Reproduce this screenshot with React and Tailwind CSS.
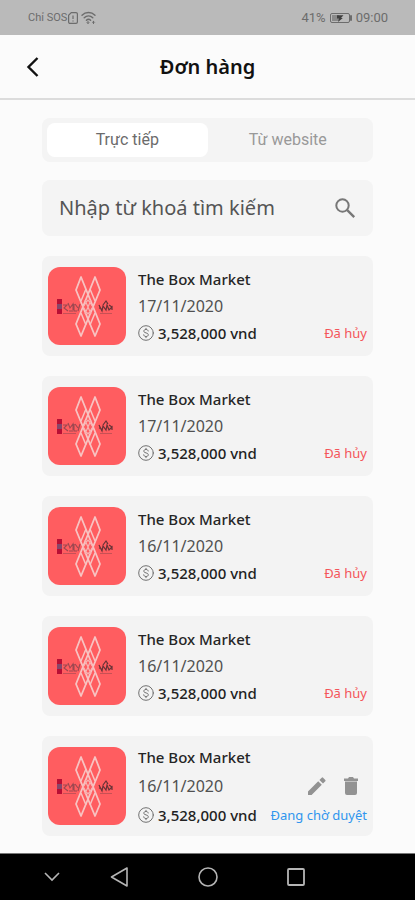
const orders = [
  { id: 1, name: 'The Box Market', date: '17/11/2020', total: 3528000, pending: false },
  { id: 2, name: 'The Box Market', date: '17/11/2020', total: 3528000, pending: false },
  { id: 3, name: 'The Box Market', date: '16/11/2020', total: 3528000, pending: false },
  { id: 4, name: 'The Box Market', date: '16/11/2020', total: 3528000, pending: false },
  { id: 5, name: 'The Box Market', date: '16/11/2020', total: 3528000, pending: true },
];

function money(n) {
  return `${n.toLocaleString('en-US')} vnd`;
}

function StatusBar() {
  return (
    <div className="h-[35px] bg-[#bababa] flex items-center justify-between pl-7 pr-[27px] pt-px font-['Roboto',sans-serif] text-[#6c6c6c]">
      <div className="flex items-center">
        <span className="text-[11px]">Chỉ SOS</span>
        <svg className="w-3 h-3.5" viewBox="0 0 12 14" fill="none" stroke="currentColor" strokeWidth="1.2">
          <path d="M4.3 1.6H9a1.4 1.4 0 0 1 1.4 1.4v8A1.4 1.4 0 0 1 9 12.4H3A1.4 1.4 0 0 1 1.6 11V4.3z" />
          <path d="M6 4.5v3.6M6 9.4v1.2" />
        </svg>
        <svg className="w-4 h-3.5 ml-0.5" viewBox="0 0 16 14" fill="none" stroke="currentColor" strokeWidth="1.4" strokeLinecap="round">
          <path d="M1 4.2C4.6.6 10.4.6 14 4.2M3.2 6.8c2.5-2.4 6.1-2.4 8.6 0M5.4 9.2c1.3-1.2 2.9-1.2 4.2 0" />
          <path d="M7 10.2v2.2M6 11.5l1 1 1-1M12.5 12.6v-2.2M11.5 11.3l1-1 1 1" strokeWidth="1" />
        </svg>
      </div>
      <div className="flex items-center gap-[3px] text-[13px]">
        <span>41%</span>
        <svg className="w-6 h-3" viewBox="0 0 24 12">
          <rect x="1.5" y="1.5" width="19" height="9" rx="1.5" fill="none" stroke="currentColor" />
          <rect x="3" y="3" width="7" height="6" fill="#8a8a8a" />
          <path d="M8 3.2h6.5L12 6h1.8L9 10l1-3.4H8z" fill="#3f3f3f" />
          <rect x="21" y="3" width="2" height="6" rx="1" fill="currentColor" />
        </svg>
        <span>09:00</span>
      </div>
    </div>
  );
}

function Header() {
  return (
    <header className="h-[65px] border-b-2 border-[#dcdcdc] grid grid-cols-[64px_1fr_64px] items-center">
      <button type="button" aria-label="Quay lại" className="h-12 pl-[26px] text-[#111]">
        <svg className="w-3.5 h-5" viewBox="0 0 14 20" fill="none" stroke="currentColor" strokeWidth="2.4">
          <path d="M11.5 1 2.5 10l9 9" />
        </svg>
      </button>
      <h1 className="text-center text-xl font-semibold text-[#111]">Đơn hàng</h1>
    </header>
  );
}

function Tabs() {
  return (
    <div className="h-11 rounded-lg bg-[#f4f4f4] p-[5px] grid grid-cols-2 font-['Roboto',sans-serif] text-base">
      <button type="button" aria-pressed="true" className="rounded-lg bg-white text-[#6b6b6b]">Trực tiếp</button>
      <button type="button" aria-pressed="false" className="rounded-lg text-[#999]">Từ website</button>
    </div>
  );
}

function SearchBox() {
  return (
    <div className="h-14 rounded-lg bg-[#f4f4f4] flex items-center pl-[17px] pr-4">
      <input
        type="text"
        aria-label="Nhập từ khoá tìm kiếm"
        placeholder="Nhập từ khoá tìm kiếm"
        className="flex-1 min-w-0 bg-transparent outline-none text-xl text-[#555] placeholder:text-[#555]"
      />
      <button type="button" aria-label="Tìm" className="text-[#777]">
        <svg className="w-6 h-6" viewBox="0 0 24 24" fill="none" stroke="currentColor" strokeWidth="2">
          <circle cx="9.5" cy="9.5" r="6.2" />
          <path d="m14.2 14.2 7 7" strokeWidth="2.4" />
        </svg>
      </button>
    </div>
  );
}

function Thumb() {
  return (
    <svg className="w-[78px] h-[78px] rounded-xl flex-shrink-0" viewBox="0 0 78 78" role="img" aria-label="The Box Market">
      <rect width="78" height="78" fill="#ff5d60" />
      {/* two crossed ribbons */}
      <g fill="none" stroke="#f8c3c2" strokeWidth="1.8" strokeLinejoin="round">
        <path d="M33 10 28 23l19 46 5-12z" />
        <path d="M47 10l5 13-19 46-5-12z" />
        <path d="M38 22l-5 12M42 22l5 12M38 58l-5-12M42 58l5-12" strokeWidth="1.5" />
        <path d="M37 33l6 14M43 33l-6 14M35 40l5-7 5 7-5 7z" stroke="#f7b3b3" strokeWidth="1.2" />
      </g>
      {/* brand on the left */}
      <rect x="9" y="32" width="5" height="15" fill="#b80f35" />
      <path d="M9 37h5v5H9z" fill="#85476b" />
      <g fill="none" stroke="#9d4850" strokeWidth="1.1">
        <path d="M15 38h4l-3 3 4 3M20 36l2 5 3-4v6M21 44h4M26 37v7h3M27 37l3 4M32 37l-2 7" />
        <path d="M15 46.5h13" strokeWidth=".6" />
      </g>
      {/* brand on the right */}
      <g fill="none" stroke="#673337" strokeWidth="1.2">
        <path d="M51 38l3 6 1-5 3 4 1-5 2 5 3-3v3M55 38l3-4 2 3M51 41l4 1M61 38l3 2" />
        <path d="M52 46.5h12" stroke="#a3484c" strokeWidth=".6" />
      </g>
    </svg>
  );
}

function CoinIcon() {
  return (
    <svg className="w-4 h-4" viewBox="0 0 16 16" fill="none" stroke="#707070" strokeLinecap="round">
      <circle cx="8" cy="8" r="7.3" />
      <path d="M10.2 6C10 4.9 9.1 4.5 8 4.5c-1.3 0-2.2.6-2.2 1.7C5.8 8.5 10.3 7.3 10.3 9.7c0 1.2-1 1.8-2.3 1.8-1.3 0-2.2-.6-2.3-1.7M8 3.3v1.2M8 11.5v1.2" />
    </svg>
  );
}

function OrderActions() {
  return (
    <div className="flex items-center gap-4 pr-2 text-[#929292]">
      <button type="button" aria-label="Sửa">
        <svg className="w-5 h-5" viewBox="0 0 20 20" fill="currentColor">
          <path d="M1 15.4V19h3.6L14.8 8.8l-3.6-3.6zM12.4 4 16 7.6l2.3-2.3a1 1 0 0 0 0-1.4l-2.2-2.2a1 1 0 0 0-1.4 0z" />
        </svg>
      </button>
      <button type="button" aria-label="Xoá">
        <svg className="w-4 h-[18px]" viewBox="0 0 16 18" fill="currentColor">
          <path d="M2 4.4h12V16a2 2 0 0 1-2 2H4a2 2 0 0 1-2-2zM1 1.5h4L6 0h4l1 1.5h4V4H1z" />
        </svg>
      </button>
    </div>
  );
}

function OrderCard({ order }) {
  return (
    <li className="h-[100px] rounded-lg bg-[#f3f3f3] flex items-center gap-3 px-1.5">
      <Thumb />
      <div className={['flex-1 min-w-0 flex flex-col text-[15px] leading-5', order.pending ? 'gap-[9px]' : 'gap-[7px]'].join(' ')}>
        <p className="font-medium text-[#252525]">{order.name}</p>
        <div className="h-5 flex items-center justify-between">
          <p className="text-base leading-5 text-[#505050]">{order.date}</p>
          {order.pending && <OrderActions />}
        </div>
        <div className="flex items-center justify-between">
          <p className="flex items-center gap-1 font-medium text-[#222] whitespace-nowrap">
            <CoinIcon />
            {money(order.total)}
          </p>
          <p className={['text-[13px] whitespace-nowrap', order.pending ? 'text-[#2f95ee]' : 'text-[#f4555a]'].join(' ')}>
            {order.pending ? 'Đang chờ duyệt' : 'Đã hủy'}
          </p>
        </div>
      </div>
    </li>
  );
}

function NavBar() {
  return (
    <nav className="mt-auto h-[47px] bg-black border-t border-[#777] grid grid-cols-[52px_68px_88px_88px] justify-items-end items-center text-[#b5b5b5]">
      <button type="button" aria-label="Ẩn thanh điều hướng" className="-mr-2">
        <svg className="w-4 h-4" viewBox="0 0 16 16" fill="none" stroke="currentColor" strokeWidth="1.6">
          <path d="m1 4 7 7 7-7" />
        </svg>
      </button>
      <button type="button" aria-label="Trở về" className="-mr-2.5">
        <svg className="w-5 h-5" viewBox="0 0 20 20" fill="none" stroke="currentColor" strokeWidth="1.6" strokeLinejoin="round">
          <path d="M17 1v18L1.5 10z" />
        </svg>
      </button>
      <button type="button" aria-label="Màn hình chính" className="-mr-2.5">
        <svg className="w-5 h-5" viewBox="0 0 20 20" fill="none" stroke="currentColor" strokeWidth="1.6">
          <circle cx="10" cy="10" r="9" />
        </svg>
      </button>
      <button type="button" aria-label="Gần đây" className="-mr-2.5">
        <svg className="w-5 h-5" viewBox="0 0 20 20" fill="none" stroke="currentColor" strokeWidth="1.8">
          <rect x="2" y="2" width="16" height="16" rx="1" />
        </svg>
      </button>
    </nav>
  );
}

export default function App() {
  return (
    <div className="min-h-screen flex flex-col bg-[#fbfbfb] font-['Noto_Sans',sans-serif]">
      <StatusBar />
      <Header />
      <main className="px-[42px] pt-[18px] pb-4 flex flex-col">
        <Tabs />
        <div className="mt-[18px]">
          <SearchBox />
        </div>
        <ul className="mt-5 flex flex-col gap-5">
          {orders.map(o => <OrderCard key={o.id} order={o} />)}
        </ul>
      </main>
      <NavBar />
    </div>
  );
}
